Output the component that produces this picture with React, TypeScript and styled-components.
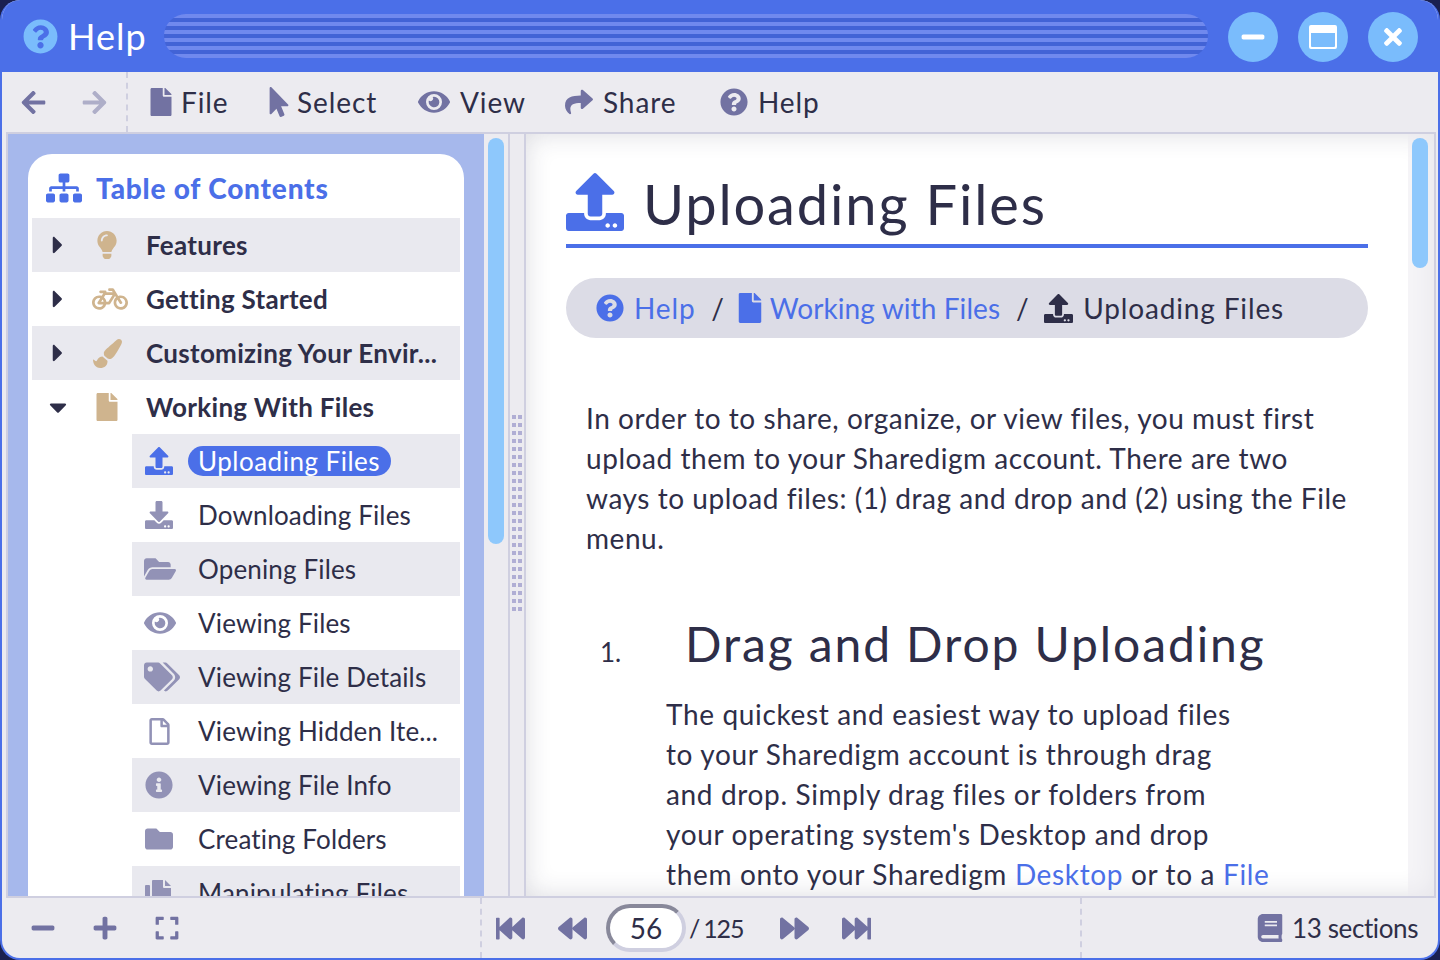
import React, { FC, ReactNode } from "react";
import styled, { createGlobalStyle } from "styled-components";
import {
  FaArrowLeft, FaArrowRight, FaBackward, FaBicycle, FaBook, FaCaretDown, FaCaretRight, FaDownload, FaExpand,
  FaEye, FaFastBackward, FaFastForward, FaFile, FaFolder, FaFolderOpen, FaForward, FaInfoCircle, FaLightbulb,
  FaMinus, FaMousePointer, FaPaintBrush, FaPlus, FaQuestionCircle, FaRegFile, FaShare, FaSitemap, FaTags,
  FaTimes, FaUpload,
} from "react-icons/fa";

const BLUE = "#4b6fe8";
const SKY = "#7abcfc";
const INK = "#2e2e48";
const TOOL = "#7272a2";
const SOFT = "#9292b6";
const TAN = "#cfb48e";
const PANEL = "#ecebf0";
const LINE = "#cfcfe0";
const SHADE = "#e9e9ef";

const GlobalStyle = createGlobalStyle`
  html, body { margin: 0; padding: 0; background: #1a2050; }
  body { font-family: "Lato", "Open Sans", sans-serif; color: ${INK}; }
  * { box-sizing: border-box; }
`;

const CopyIcon: FC<{ size: number }> = ({ size }) => (
  <svg width={size} height={size} viewBox="0 0 28 28" fill="currentColor">
    <rect x="0" y="6" width="5" height="22" rx="1" />
    <path d="M7 2a1 1 0 0 1 1-1h10v7a1 1 0 0 0 1 1h7v18a1 1 0 0 1-1 1H8a1 1 0 0 1-1-1z" />
    <path d="M20 1l6 6h-6z" />
  </svg>
);

const MaximizeIcon: FC = () => (
  <svg width={28} height={24} viewBox="0 0 28 24" fill="currentColor">
    <path
      fillRule="evenodd"
      d="M2 0h24a2 2 0 0 1 2 2v20a2 2 0 0 1-2 2H2a2 2 0 0 1-2-2V2a2 2 0 0 1 2-2zM2 8v13a1 1 0 0 0 1 1h22a1 1 0 0 0 1-1V8z"
    />
  </svg>
);

type Child = { label: string; icon: ReactNode; nudge?: number };

const parents = [
  { label: "Features", icon: <FaLightbulb size={28} /> },
  { label: "Getting Started", icon: <FaBicycle size={36} />, nudge: 3 },
  { label: "Customizing Your Envir...", icon: <FaPaintBrush size={29} /> },
];

const children: Child[] = [
  { label: "Downloading Files", icon: <FaDownload size={28} /> },
  { label: "Opening Files", icon: <FaFolderOpen size={32} />, nudge: 1 },
  { label: "Viewing Files", icon: <FaEye size={32} />, nudge: 1 },
  { label: "Viewing File Details", icon: <FaTags size={36} />, nudge: 3 },
  { label: "Viewing Hidden Ite...", icon: <FaRegFile size={27} /> },
  { label: "Viewing File Info", icon: <FaInfoCircle size={28} /> },
  { label: "Creating Folders", icon: <FaFolder size={28} /> },
  { label: "Manipulating Files", icon: <CopyIcon size={28} /> },
];

export default function App() {
  return (
    <>
      <GlobalStyle />
      <Window>
        <TitleBar>
          <AppIcon><FaQuestionCircle size={35} /></AppIcon>
          <AppTitle>Help</AppTitle>
          <Stripes />
          <WindowButtons>
            <WindowButton><FaMinus size={26} /></WindowButton>
            <WindowButton><MaximizeIcon /></WindowButton>
            <WindowButton><FaTimes size={26} /></WindowButton>
          </WindowButtons>
        </TitleBar>

        <Toolbar>
          <NavGroup>
            <ToolIcon><FaArrowLeft size={27} /></ToolIcon>
            <ToolIcon $faded><FaArrowRight size={27} /></ToolIcon>
          </NavGroup>
          <MenuGroup>
            <MenuItem $width={117} $gap={6}><ToolIcon><FaFile size={28} /></ToolIcon>File</MenuItem>
            <MenuItem $width={154} $gap={3}><ToolIcon><FaMousePointer size={30} /></ToolIcon>Select</MenuItem>
            <MenuItem $width={147}><ToolIcon><FaEye size={32} /></ToolIcon>View</MenuItem>
            <MenuItem $width={155}><ToolIcon><FaShare size={28} /></ToolIcon>Share</MenuItem>
            <MenuItem><ToolIcon><FaQuestionCircle size={28} /></ToolIcon>Help</MenuItem>
          </MenuGroup>
        </Toolbar>

        <Body>
          <SidePane>
            <TocCard>
              <TocHeader><FaSitemap size={36} /><span>Table of Contents</span></TocHeader>
              {parents.map((item, i) => (
                <ParentRow key={item.label} $shaded={i % 2 === 0}>
                  <Caret><FaCaretRight size={28} /></Caret>
                  <ParentIcon $nudge={item.nudge}>{item.icon}</ParentIcon>
                  {item.label}
                </ParentRow>
              ))}
              <ParentRow>
                <Caret><FaCaretDown size={28} /></Caret>
                <ParentIcon><FaFile size={28} /></ParentIcon>
                Working With Files
              </ParentRow>
              <ChildRow $shaded>
                <ChildIcon $active><FaUpload size={28} /></ChildIcon>
                <Selected>Uploading Files</Selected>
              </ChildRow>
              {children.map((item, i) => (
                <ChildRow key={item.label} $shaded={i % 2 === 1}>
                  <ChildIcon $nudge={item.nudge}>{item.icon}</ChildIcon>
                  {item.label}
                </ChildRow>
              ))}
            </TocCard>
          </SidePane>
          <Gutter><Thumb $height={406} /></Gutter>
          <Splitter><Grip /></Splitter>
          <Reader>
            <Article>
              <PageTitle><FaUpload size={58} /><span>Uploading Files</span></PageTitle>
              <Crumbs>
                <Crumb $link $spacing={0.9}><FaQuestionCircle size={28} />Help</Crumb>
                <Slash>/</Slash>
                <Crumb $link $gap={5} $pull={5} $spacing={0.1}><FaFile size={30} />Working with Files</Crumb>
                <Slash>/</Slash>
                <Crumb $spacing={0.85}><FaUpload size={29} />Uploading Files</Crumb>
              </Crumbs>
              <Intro>
                In order to to share, organize, or view files, you must first<br />
                upload them to your Sharedigm account. There are two<br />
                ways to upload files: (1) drag and drop and (2) using the File<br />
                menu.
              </Intro>
              <SectionHead><SectionNumber>1.</SectionNumber><SectionTitle>Drag and Drop Uploading</SectionTitle></SectionHead>
              <SectionText>
                The quickest and easiest way to upload files<br />
                to your Sharedigm account is through drag<br />
                and drop. Simply drag files or folders from<br />
                your operating system's Desktop and drop<br />
                them onto your Sharedigm <TextLink>Desktop</TextLink> or to a <TextLink>File</TextLink>
              </SectionText>
            </Article>
            <ReaderGutter><Thumb $height={130} /></ReaderGutter>
          </Reader>
        </Body>

        <Footer>
          <ZoomGroup>
            <ToolIcon><FaMinus size={26} /></ToolIcon>
            <ToolIcon><FaPlus size={26} /></ToolIcon>
            <ToolIcon><FaExpand size={26} /></ToolIcon>
          </ZoomGroup>
          <Pager>
            <PagerButton><FaFastBackward size={29} /></PagerButton>
            <PagerButton><FaBackward size={29} /></PagerButton>
            <PageInput>56</PageInput>
            <PageTotal>/ 125</PageTotal>
            <PagerButton><FaForward size={29} /></PagerButton>
            <PagerButton><FaFastForward size={29} /></PagerButton>
          </Pager>
          <Sections><ToolIcon><FaBook size={28} /></ToolIcon>13 sections</Sections>
        </Footer>
      </Window>
    </>
  );
}

const Window = styled.div`
  width: 1440px;
  height: 960px;
  display: flex;
  flex-direction: column;
  overflow: hidden;
  background: ${PANEL};
  border: 2px solid ${BLUE};
  border-top: 0;
  border-radius: 20px;
`;

const TitleBar = styled.header`
  height: 72px;
  margin: 0 -2px;
  padding: 0 22px 0 23px;
  flex: none;
  display: flex;
  align-items: center;
  background: ${BLUE};
`;

const AppIcon = styled.div`
  width: 35px;
  height: 35px;
  display: flex;
  color: ${SKY};
`;

const AppTitle = styled.div`
  width: 106px;
  padding-left: 10px;
  font-size: 36px;
  letter-spacing: 1px;
  color: #fff;
`;

const Stripes = styled.div`
  width: 1044px;
  height: 44px;
  border-radius: 22px;
  background: repeating-linear-gradient(180deg, #7089ee 0 4px, #4263d6 4px 8px);
`;

const WindowButtons = styled.div`
  margin: 2px 0 0 20px;
  display: flex;
  gap: 20px;
`;

const WindowButton = styled.div`
  width: 50px;
  height: 50px;
  border-radius: 50%;
  display: flex;
  align-items: center;
  justify-content: center;
  color: #fff;
  background: ${SKY};
`;

const ToolIcon = styled.span<{ $faded?: boolean }>`
  display: inline-flex;
  color: ${TOOL};
  opacity: ${(p) => (p.$faded ? 0.5 : 1)};
`;

const Toolbar = styled.div`
  height: 60px;
  flex: none;
  display: flex;
  align-items: center;
`;

const NavGroup = styled.div`
  width: 126px;
  height: 100%;
  padding-left: 18px;
  display: flex;
  align-items: center;
  gap: 34px;
  border-right: 2px dashed ${LINE};
`;

const MenuGroup = styled.nav`
  padding-left: 19px;
  display: flex;
  align-items: center;
`;

const MenuItem = styled.div<{ $width?: number; $gap?: number }>`
  width: ${(p) => (p.$width ? `${p.$width}px` : "auto")};
  display: flex;
  align-items: center;
  gap: ${(p) => p.$gap ?? 10}px;
  font-size: 28px;
  letter-spacing: 0.9px;
`;

const Body = styled.main`
  flex: 1;
  min-height: 0;
  margin: 0 2px 0 4px;
  display: flex;
  overflow: hidden;
  border: 2px solid ${LINE};
`;

const SidePane = styled.aside`
  width: 476px;
  flex: none;
  padding: 20px 20px 0;
  overflow: hidden;
  background: #a6b8ec;
`;

const TocCard = styled.div`
  min-height: 100%;
  padding: 0 4px;
  border-radius: 24px 24px 0 0;
  background: #fff;
`;

const TocHeader = styled.div`
  height: 64px;
  padding: 4px 0 0 14px;
  display: flex;
  align-items: center;
  gap: 14px;
  font-size: 28px;
  font-weight: 900;
  letter-spacing: 0.8px;
  color: ${BLUE};
`;

const ParentRow = styled.div<{ $shaded?: boolean }>`
  height: 54px;
  padding-left: 14px;
  display: flex;
  align-items: center;
  font-size: 26px;
  font-weight: 700;
  letter-spacing: 0.3px;
  white-space: nowrap;
  background: ${(p) => (p.$shaded ? SHADE : "transparent")};
`;

const Caret = styled.span`
  width: 24px;
  display: flex;
  justify-content: center;
`;

const ParentIcon = styled.span<{ $nudge?: number }>`
  width: 74px;
  margin-right: 2px;
  display: flex;
  justify-content: center;
  color: ${TAN};
  transform: translateX(${(p) => p.$nudge ?? 0}px);
`;

const ChildRow = styled.div<{ $shaded?: boolean }>`
  height: 54px;
  margin-left: 100px;
  display: flex;
  align-items: center;
  font-size: 26px;
  letter-spacing: 0.15px;
  white-space: nowrap;
  background: ${(p) => (p.$shaded ? SHADE : "transparent")};
`;

const ChildIcon = styled.span<{ $active?: boolean; $nudge?: number }>`
  width: 54px;
  margin-right: 12px;
  display: flex;
  justify-content: center;
  color: ${(p) => (p.$active ? BLUE : SOFT)};
  transform: translateX(${(p) => p.$nudge ?? 0}px);
`;

const Selected = styled.span`
  height: 30px;
  margin-left: -10px;
  padding: 0 11px 0 10px;
  display: flex;
  align-items: center;
  border-radius: 15px;
  letter-spacing: 0.5px;
  color: #fff;
  background: ${BLUE};
`;

const Gutter = styled.div`
  width: 24px;
  flex: none;
  padding: 4px 4px 0;
`;

const Thumb = styled.div<{ $height: number }>`
  width: 16px;
  height: ${(p) => p.$height}px;
  border-radius: 8px;
  background: #8ec8fc;
`;

const Splitter = styled.div`
  width: 18px;
  flex: none;
  display: flex;
  align-items: center;
  justify-content: center;
  border-left: 2px solid ${LINE};
  border-right: 2px solid ${LINE};
`;

const Grip = styled.div`
  width: 10px;
  height: 200px;
  background: repeating-linear-gradient(90deg, #b0aed4 0 4px, transparent 4px 6px);
  mask-image: repeating-linear-gradient(180deg, #000 0 4px, transparent 4px 8px);
`;

const Reader = styled.section`
  flex: 1;
  min-width: 0;
  display: flex;
  background: #fff;
  box-shadow: inset 0 0 26px rgba(40, 40, 70, 0.16);
`;

const Article = styled.article`
  width: 882px;
  flex: none;
  padding: 36px 40px 0;
  overflow: hidden;
`;

const ReaderGutter = styled.div`
  flex: 1;
  padding: 4px 0 0 4px;
  background: rgba(236, 235, 240, 0.55);
`;

const PageTitle = styled.h1`
  height: 78px;
  margin: 0;
  display: flex;
  align-items: flex-start;
  gap: 19px;
  font-size: 56px;
  font-weight: 400;
  line-height: 68px;
  letter-spacing: 1.85px;
  color: ${INK};
  border-bottom: 4px solid ${BLUE};
  svg { color: ${BLUE}; margin-top: 3px; }
`;

const Crumbs = styled.div`
  height: 60px;
  margin-top: 30px;
  padding-left: 30px;
  display: flex;
  align-items: center;
  border-radius: 30px;
  font-size: 28px;
  background: #dcdce6;
`;

const Crumb = styled.span<{ $link?: boolean; $gap?: number; $pull?: number; $spacing: number }>`
  margin-left: -${(p) => p.$pull ?? 0}px;
  display: flex;
  align-items: center;
  gap: ${(p) => p.$gap ?? 10}px;
  letter-spacing: ${(p) => p.$spacing}px;
  color: ${(p) => (p.$link ? BLUE : INK)};
  svg { color: ${(p) => (p.$link ? BLUE : INK)}; }
`;

const Slash = styled.span`
  width: 44px;
  text-align: center;
  color: ${INK};
`;

const Intro = styled.p`
  margin: 60px 0 0 20px;
  font-size: 28px;
  line-height: 40px;
  letter-spacing: 0.55px;
  white-space: nowrap;
`;

const SectionHead = styled.div`
  margin: 56px 0 0 34px;
  display: flex;
  align-items: center;
`;

const SectionNumber = styled.span`
  width: 85px;
  padding-top: 16px;
  font-size: 26px;
`;

const SectionTitle = styled.h2`
  margin: 0;
  font-size: 48px;
  font-weight: 400;
  line-height: 60px;
  letter-spacing: 1.9px;
`;

const SectionText = styled.p`
  margin: 20px 0 0 100px;
  font-size: 28px;
  line-height: 40px;
  letter-spacing: 0.65px;
  white-space: nowrap;
`;

const TextLink = styled.span`
  color: ${BLUE};
`;

const Footer = styled.footer`
  height: 60px;
  flex: none;
  display: flex;
  align-items: center;
`;

const ZoomGroup = styled.div`
  width: 480px;
  height: 100%;
  padding-left: 28px;
  display: flex;
  align-items: center;
  gap: 36px;
  border-right: 2px dashed ${LINE};
`;

const Pager = styled.div`
  width: 600px;
  height: 100%;
  padding-left: 14px;
  display: flex;
  align-items: center;
  border-right: 2px dashed ${LINE};
`;

const PagerButton = styled.span`
  width: 62px;
  display: inline-flex;
  color: ${TOOL};
`;

const PageInput = styled.div`
  width: 80px;
  height: 48px;
  margin-left: -14px;
  display: flex;
  align-items: center;
  justify-content: center;
  border-radius: 24px;
  font-size: 28px;
  background: #fff;
  border: 4px solid ${LINE};
  border-top-color: #88889a;
  border-left-color: #88889a;
`;

const PageTotal = styled.span`
  width: 94px;
  padding-left: 3px;
  font-size: 25px;
  letter-spacing: -1.2px;
  word-spacing: -1px;
`;

const Sections = styled.div`
  flex: 1;
  padding-right: 20px;
  display: flex;
  align-items: center;
  justify-content: flex-end;
  gap: 8px;
  font-size: 26px;
  letter-spacing: -0.4px;
`;
